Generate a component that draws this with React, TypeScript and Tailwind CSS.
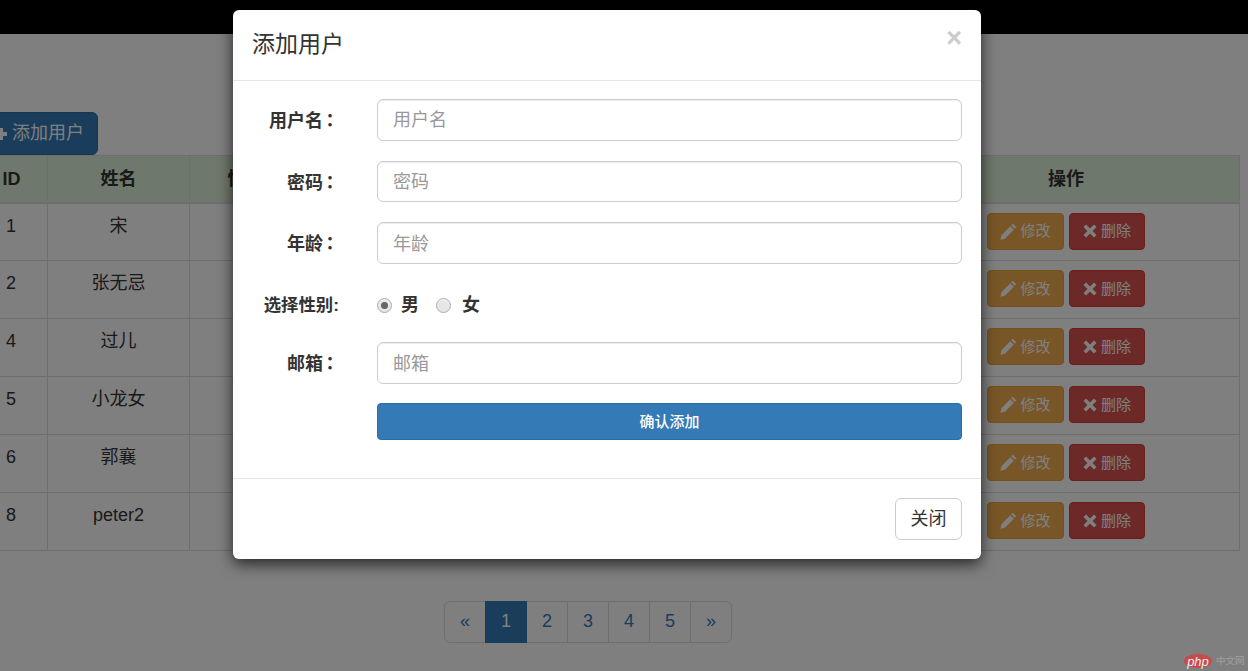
const zh = "font-['Liberation_Sans','Noto_Sans_CJK_SC',sans-serif]";

const rows = [
  ["1", "宋"],
  ["2", "张无忌"],
  ["4", "过儿"],
  ["5", "小龙女"],
  ["6", "郭襄"],
  ["8", "peter2"],
];

function PlusIcon() {
  return (
    <svg width="14" height="14" viewBox="0 0 14 14" className="shrink-0">
      <path d="M5 1h4v4h4v4H9v4H5V9H1V5h4z" fill="currentColor" />
    </svg>
  );
}

function PencilIcon() {
  return (
    <svg width="17" height="17" viewBox="0 0 16 16" className="shrink-0">
      <path d="M12 .6l3.4 3.4L13.9 5.5 10.5 2.1zM9.6 3l3.4 3.4-8.4 8.4-4.2 1 1-4.2z" fill="currentColor" />
    </svg>
  );
}

function CrossIcon() {
  return (
    <svg width="14" height="14" viewBox="0 0 14 14" className="shrink-0">
      <path d="M3 .5L7 4.5 11 .5 13.5 3 9.5 7l4 4L11 13.5l-4-4-4 4L.5 11l4-4-4-4z" fill="currentColor" />
    </svg>
  );
}

function Colon() {
  return <span className="-ml-[2px] font-['Noto_Sans_CJK_TC',sans-serif]">：</span>;
}

function Field({ label }: { label: string }) {
  return (
    <div className="flex items-center gap-9">
      <label className="w-[88px] shrink-0 pt-[2px] pr-[2px] text-right font-bold whitespace-nowrap">
        {label}
        <Colon />
      </label>
      <input
        placeholder={label}
        className="h-[41.67px] min-w-0 flex-1 rounded-md border border-[#ccc] bg-white px-[15px] pt-[2px] text-[18px] shadow-[inset_0_1px_1px_rgba(0,0,0,0.075)] outline-none placeholder:text-[#999]"
      />
    </div>
  );
}

function Radio({ checked }: { checked?: boolean }) {
  return (
    <span className="flex h-[15px] w-[15px] shrink-0 items-center justify-center rounded-full border border-[#ababab] bg-[#e6e6e6] shadow-[inset_0_1px_1px_rgba(255,255,255,0.8)]">
      {checked && <span className="h-[7px] w-[7px] rounded-full bg-[#666]" />}
    </span>
  );
}

export default function App() {
  return (
    <div className={`relative h-[671px] w-[1248px] overflow-hidden bg-white text-[18px] leading-[25.7px] text-[#333] ${zh}`}>
      <div className="h-[34px] bg-black" />

      <main className="-ml-[25px] w-[1264px]">
        <button className="mt-[78px] ml-[3px] flex h-[43px] w-[120px] items-center gap-1 rounded-md border border-[#2e6da4] bg-[#337ab7] pl-[15px] text-white">
          <PlusIcon />
          <span>添加用户</span>
        </button>

        <table className="w-[1264px] table-fixed border-collapse bg-white">
          <colgroup>
            <col className="w-[72px]" />
            <col className="w-[142px]" />
            <col className="w-[112px]" />
            <col className="w-[591px]" />
            <col className="w-[347px]" />
          </colgroup>
          <thead>
            <tr className="h-[47px] bg-[#dff0d8]">
              <th className="border border-b-2 border-[#ddd] pt-[3px] font-bold">ID</th>
              <th className="border border-b-2 border-[#ddd] pt-[3px] font-bold">姓名</th>
              <th className="border border-b-2 border-[#ddd] pt-[3px] font-bold">性别</th>
              <th className="border border-b-2 border-[#ddd]" />
              <th className="border border-b-2 border-[#ddd] pt-[3px] font-bold">操作</th>
            </tr>
          </thead>
          <tbody>
            {rows.map(([id, name]) => (
              <tr key={id} className="h-[58px]">
                <td className="border border-[#ddd] pt-[10px] pl-[30px] align-top">{id}</td>
                <td className="border border-[#ddd] pt-[10px] text-center align-top">{name}</td>
                <td className="border border-[#ddd]" />
                <td className="border border-[#ddd]" />
                <td className="border border-[#ddd] align-top">
                  <div className="flex justify-center gap-[5px] pt-[9px] text-[15px] text-white">
                    <button className="flex h-[37px] w-[77px] items-center justify-center gap-[3px] rounded border border-[#eea236] bg-[#f0ad4e]">
                      <PencilIcon />
                      <span>修改</span>
                    </button>
                    <button className="flex h-[37px] w-[76px] items-center justify-center gap-[4px] rounded border border-[#d43f3a] bg-[#d9534f]">
                      <CrossIcon />
                      <span>删除</span>
                    </button>
                  </div>
                </td>
              </tr>
            ))}
          </tbody>
        </table>

        <nav className="mt-[50px] ml-[469px] flex w-[288px] text-[#337ab7]">
          {["«", "1", "2", "3", "4", "5", "»"].map((p, i) => (
            <a
              key={p}
              className={`-mr-px flex h-[42px] w-[42px] items-center justify-center border ${
                p === "1" ? "relative border-[#337ab7] bg-[#337ab7] text-white" : "border-[#ddd] bg-white"
              } ${i === 0 ? "rounded-l-md" : ""} ${i === 6 ? "rounded-r-md" : ""}`}
            >
              {p}
            </a>
          ))}
        </nav>
      </main>

      <div className="absolute inset-0 bg-black/50" />

      <section className="absolute top-[10px] left-[233px] flex h-[549px] w-[748px] flex-col rounded-md bg-white shadow-[0_5px_15px_rgba(0,0,0,0.7)]">
        <header className="flex h-[71px] shrink-0 items-start justify-between border-b border-[#e5e5e5] pr-[19px] pl-[19px]">
          <h4 className="pt-[19px] text-[23px] leading-[30px] font-normal">添加用户</h4>
          <span className="pt-[15px] font-['Liberation_Sans',sans-serif] text-[27px] leading-[27px] font-bold text-[#ccc]">×</span>
        </header>

        <form className="flex flex-1 flex-col gap-5 pt-[18px] pr-[19px] pl-[20px]">
          <Field label="用户名" />
          <Field label="密码" />
          <Field label="年龄" />
          <div className="flex h-[38.3px] items-start gap-9 pt-[9px]">
            <label className="w-[88px] shrink-0 pr-[2px] text-right text-[17.4px] font-bold whitespace-nowrap">选择性别:</label>
            <div className="flex items-center font-bold">
              <Radio checked />
              <span className="mr-[17px] ml-[9px]">男</span>
              <Radio />
              <span className="ml-[11px]">女</span>
            </div>
          </div>
          <Field label="邮箱" />
          <div className="-mt-[1px] pl-[124px]">
            <button type="button" className="h-[37px] w-full rounded border border-[#2e6da4] bg-[#337ab7] text-[15px] font-medium text-white">
              确认添加
            </button>
          </div>
        </form>

        <footer className="flex h-[81px] shrink-0 items-center justify-end border-t border-[#e5e5e5] pr-[19px]">
          <button className="h-[42px] w-[67px] rounded-md border border-[#ccc] bg-white pt-[2px]">关闭</button>
        </footer>
      </section>

      <div className="absolute top-[654px] left-[1184px] flex items-center gap-[4px]">
        <span className="flex h-[14px] w-[28px] items-center justify-center rounded-[50%] bg-[#c84a4a] font-['Liberation_Sans',sans-serif] text-[13px] leading-none text-[#eee] italic">
          php
        </span>
        <span className="text-[9.5px] leading-none text-[#a0a0a0]">中文网</span>
      </div>
    </div>
  );
}
